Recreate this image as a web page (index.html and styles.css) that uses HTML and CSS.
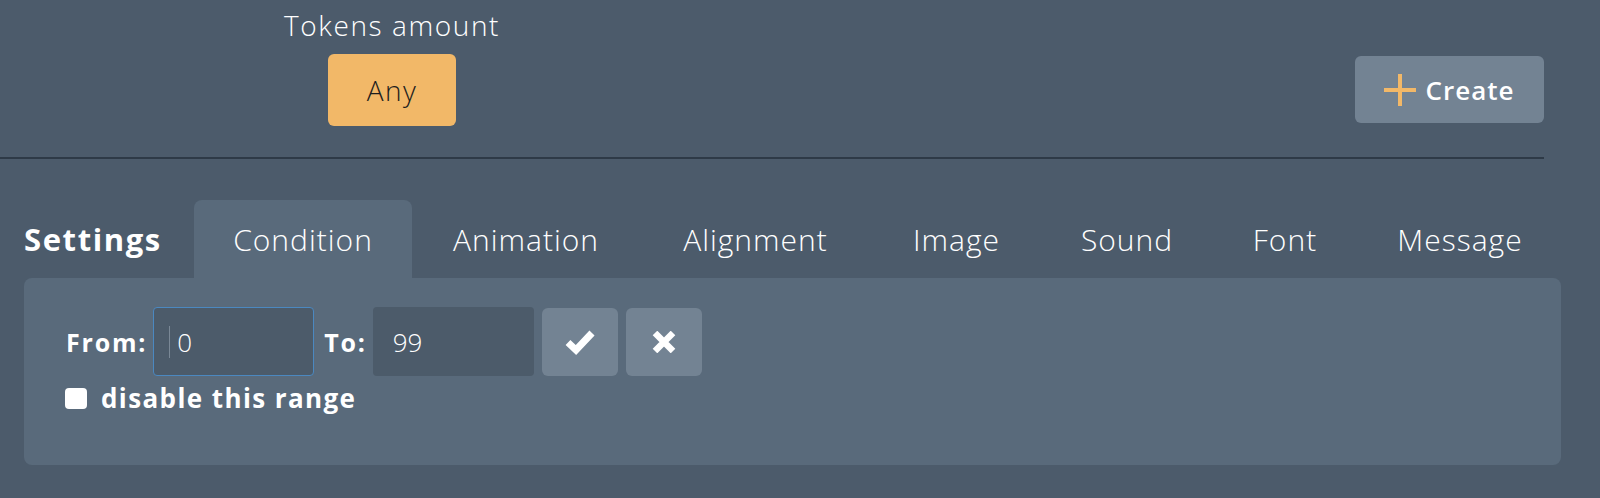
FILE: index.html
```html
<!DOCTYPE html>
<html>
<head>
<meta charset="utf-8">
<link rel="stylesheet" href="styles.css">
</head>
<body>
<div class="top">
  <div class="tokens">
    <div class="tokens-label">Tokens amount</div>
    <button class="any-btn">Any</button>
  </div>
  <button class="create-btn">
    <svg class="plus" width="32" height="32" viewBox="0 0 32 32"><path d="M16 0V32M0 16H32" stroke="#f2b868" stroke-width="4"/></svg>
    <span>Create</span>
  </button>
</div>
<div class="settings">
  <div class="tabs">
    <div class="settings-title">Settings</div>
    <div class="tab tab-condition active">Condition</div>
    <div class="tab tab-animation">Animation</div>
    <div class="tab tab-alignment">Alignment</div>
    <div class="tab tab-image">Image</div>
    <div class="tab tab-sound">Sound</div>
    <div class="tab tab-font">Font</div>
    <div class="tab tab-message">Message</div>
  </div>
  <div class="panel">
    <div class="range-row">
      <span class="lbl">From:</span>
      <div class="field focused"><span class="caret"></span>0</div>
      <span class="lbl">To:</span>
      <div class="field">99</div>
      <button class="icon-btn"><svg width="30" height="26" viewBox="0 0 30 26"><path d="M3 13.5L11 21L27 4" fill="none" stroke="#fff" stroke-width="7" stroke-linejoin="miter"/></svg></button>
      <button class="icon-btn"><svg width="24" height="22" viewBox="0 0 24 22"><path d="M3 2L21 20M21 2L3 20" fill="none" stroke="#fff" stroke-width="6.5"/></svg></button>
    </div>
    <label class="check-row"><span class="box"></span><span>disable this range</span></label>
  </div>
</div>
</body>
</html>
```
FILE: styles.css
```css
* { box-sizing: border-box; }
body {
  margin: 0;
  background: #4c5b6b;
  font-family: "Open Sans", "Noto Sans", sans-serif;
  color: #fff;
  height: 498px;
  overflow: hidden;
}
button { font-family: inherit; border: none; padding: 0; cursor: pointer; }
.top {
  width: 1544px;
  height: 159px;
  border-bottom: 2px solid #2e3a47;
  display: flex;
  justify-content: space-between;
  align-items: flex-start;
}
.tokens {
  margin-left: 262px;
  width: 260px;
  display: flex;
  flex-direction: column;
  align-items: center;
  padding-top: 8px;
}
.tokens-label {
  font-size: 28px;
  font-weight: 300;
  line-height: 34px;
  letter-spacing: 1.6px;
}
.any-btn {
  margin-top: 12px;
  width: 128px;
  height: 72px;
  border-radius: 6px;
  background: #f2b868;
  color: #1e1e1e;
  font-size: 28px;
  font-weight: 300;
  letter-spacing: 1.5px;
}
.create-btn {
  margin-top: 56px;
  width: 189px;
  height: 67px;
  border-radius: 6px;
  background: #738393;
  color: #fff;
  display: flex;
  align-items: center;
  justify-content: center;
  gap: 9px;
  font-size: 26px;
  font-weight: 600;
  letter-spacing: 1px;
}
.settings { padding-top: 41px; }
.tabs {
  display: flex;
  align-items: stretch;
  padding-left: 24px;
  height: 78px;
}
.settings-title {
  font-size: 31px;
  font-weight: 700;
  display: flex;
  align-items: center;
  width: 170px;
  letter-spacing: 1.6px;
}
.tab {
  display: flex;
  align-items: center;
  justify-content: center;
  font-size: 30px;
  font-weight: 300;
  letter-spacing: 1px;
  border-radius: 8px 8px 0 0;
}
.tab-condition { width: 218px; }
.tab-animation { width: 228px; }
.tab-alignment { width: 231px; }
.tab-image { width: 171px; }
.tab-sound { width: 170px; }
.tab-font { width: 146px; }
.tab-message { width: 204px; }
.tab.active { background: #596a7b; }
.panel {
  margin: 0 39px 0 24px;
  height: 187px;
  background: #596a7b;
  border-radius: 8px;
  padding: 29px 40px;
}
.range-row {
  display: flex;
  align-items: center;
  height: 69px;
}
.lbl {
  font-size: 25px;
  font-weight: 700;
  margin: 0 6px 0 2px;
  letter-spacing: 1.8px;
}
.field {
  width: 161px;
  height: 69px;
  border-radius: 4px;
  background: #4c5b6a;
  display: flex;
  align-items: center;
  padding-left: 20px;
  font-size: 26px;
  font-weight: 300;
  margin-right: 8px;
}
.field.focused {
  border: 1.5px solid #4b88c0;
  padding-left: 15px;
}
.caret {
  width: 1px;
  height: 32px;
  background: #7a8896;
  margin-right: 7px;
}
.icon-btn {
  width: 76px;
  height: 68px;
  border-radius: 6px;
  background: #738393;
  margin-right: 8px;
  display: flex;
  align-items: center;
  justify-content: center;
}
.check-row {
  margin-top: 4px;
  display: flex;
  align-items: center;
  gap: 14px;
  font-size: 26px;
  font-weight: 700;
  letter-spacing: 1.4px;
}
.box {
  width: 22px;
  height: 21px;
  margin-left: 1px;
  background: #fff;
  border-radius: 4px;
}
```
